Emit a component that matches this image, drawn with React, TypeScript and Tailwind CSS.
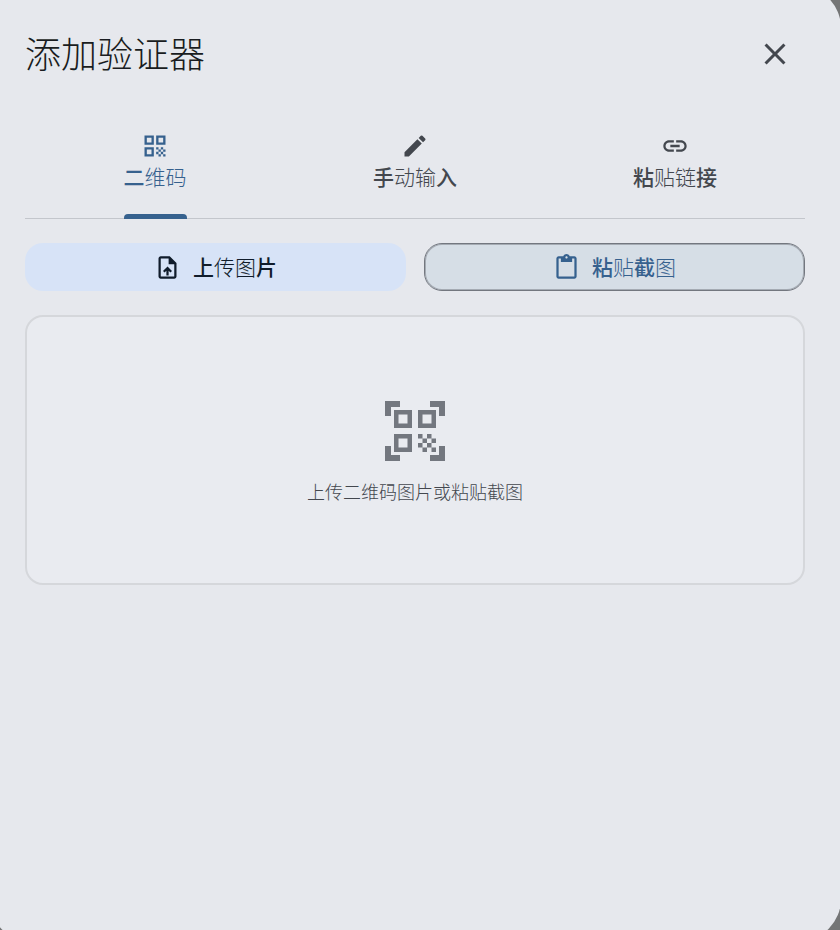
import { useState, type ReactNode } from "react";
import type { IconType } from "react-icons";
import {
  MdClose,
  MdContentPaste,
  MdEdit,
  MdLink,
  MdOutlineUploadFile,
  MdQrCode,
  MdQrCodeScanner,
} from "react-icons/md";

function Strong({ children }: { children: ReactNode }) {
  return <span className="font-medium">{children}</span>;
}

type TabItem = { id: string; icon: IconType; label: ReactNode };

const tabs: TabItem[] = [
  { id: "qr", icon: MdQrCode, label: <><Strong>二</Strong>维码</> },
  { id: "manual", icon: MdEdit, label: <><Strong>手</Strong>动输<Strong>入</Strong></> },
  { id: "link", icon: MdLink, label: <><Strong>粘</Strong>贴链<Strong>接</Strong></> },
];

export default function App() {
  const [active, setActive] = useState("qr");

  return (
    <div className="flex h-screen overflow-hidden bg-[#747576] font-['Noto_Sans_CJK_SC',sans-serif] font-light">
      <main
        role="dialog"
        aria-labelledby="dialog-title"
        className="-mt-[14px] -mr-px -mb-[11px] -ml-[11px] flex min-w-0 flex-1 flex-col rounded-[42px] bg-[#e6e8ed] px-9 pt-[38px] text-[#43474e]"
      >
        <header className="flex items-start justify-between">
          <h1 id="dialog-title" className="text-4xl leading-[56px] text-[#191c20]">
            添加验证器
          </h1>
          <button type="button" aria-label="关闭" className="flex size-[60px] items-center justify-center">
            <MdClose className="size-9" />
          </button>
        </header>

        <div role="tablist" className="mt-9 grid grid-cols-3 border-b border-[#c3c6cc]">
          {tabs.map(({ id, icon: Icon, label }) => (
            <button
              key={id}
              type="button"
              role="tab"
              aria-selected={active === id}
              onClick={() => setActive(id)}
              className={`flex justify-center ${active === id ? "text-[#36618e]" : ""}`}
            >
              <span className="relative flex h-[98px] flex-col items-center pt-3 text-[21px] leading-[30px]">
                <Icon className="mb-px size-7" />
                <span>{label}</span>
                {active === id && (
                  <span className="absolute inset-x-0 -bottom-px h-[5px] rounded-t-[4px] bg-[#36618e]" />
                )}
              </span>
            </button>
          ))}
        </div>

        <div className="mt-6 grid grid-cols-2 gap-[18px] text-[21px] leading-[30px]">
          <button
            type="button"
            className="flex h-12 items-center justify-center gap-3 rounded-[18px] bg-[#d7e3f7] text-[#101c2b]"
          >
            <MdOutlineUploadFile className="size-[27px]" />
            <span className="pb-0.5"><Strong>上</Strong>传图<Strong>片</Strong></span>
          </button>
          <button
            type="button"
            className="flex h-12 items-center justify-center gap-3 rounded-[18px] border border-[#73777f] bg-[#d6dee6] text-[#36618e] shadow-[inset_0_0_0_1px_#a5abb3]"
          >
            <MdContentPaste className="size-[27px]" />
            <span className="pb-0.5"><Strong>粘</Strong>贴<Strong>截</Strong>图</span>
          </button>
        </div>

        <section className="mt-6 flex h-[270px] flex-col items-center justify-center gap-[11px] rounded-[18px] border-2 border-[#d5d7db] bg-[#e9ebf0]">
          <MdQrCodeScanner className="size-[72px] text-[#73777f]" />
          <p className="text-lg leading-[27px]">上传二维码图片或粘贴截图</p>
        </section>
      </main>
    </div>
  );
}
